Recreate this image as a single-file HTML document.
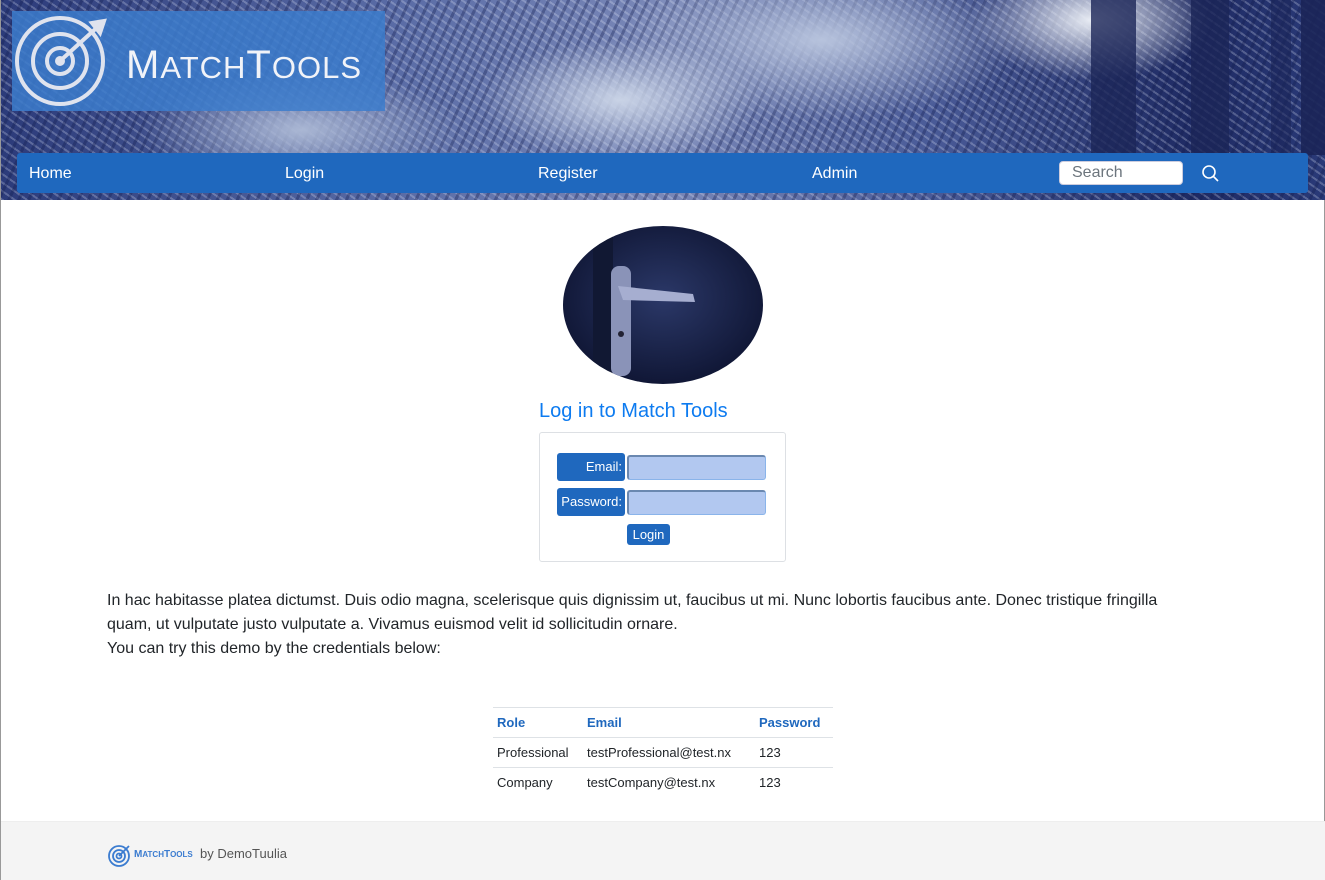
<!DOCTYPE html>
<html><head><meta charset="utf-8">
<style>
*{box-sizing:border-box;margin:0;padding:0}
body{width:1325px;height:880px;overflow:hidden;background:#fff;font-family:"Liberation Sans",sans-serif;color:#212529;position:relative;border-left:1px solid #999;border-right:1px solid #999}
.hdr{position:absolute;left:0;top:0;width:1325px;height:200px;overflow:hidden;
background:
radial-gradient(ellipse 120px 60px at 1090px 20px,#e8ecf4,transparent),
radial-gradient(ellipse 140px 60px at 620px 100px,#c9d3e6,transparent),
radial-gradient(ellipse 200px 80px at 820px 40px,#b7c3dd,transparent),
radial-gradient(ellipse 160px 60px at 300px 130px,#aab7d4,transparent),
repeating-linear-gradient(115deg,rgba(20,30,80,.35) 0 3px,transparent 3px 9px),
repeating-linear-gradient(35deg,rgba(230,235,250,.25) 0 2px,transparent 2px 7px),
linear-gradient(90deg,#2c3b7a,#5a6ca6 30%,#7a88b8 50%,#4a5b98 70%,#1e2a63 90%,#2a3a78)}
.trunk{position:absolute;top:0;height:155px;background:#1b2558;opacity:.8}
.logo{position:absolute;left:11px;top:11px;width:373px;height:100px;background:rgba(60,125,205,.85)}
.logo .t{position:absolute;left:114px;top:32px;color:#f1f3f8;font-size:40px;letter-spacing:1px;line-height:44px}
.nav{position:absolute;left:16px;top:153px;width:1291px;height:40px;background:#1f68be;border-radius:3px;color:#fff;font-size:16px}
.nav span{position:absolute;top:12px}
.srch{position:absolute;left:1042px;top:8px;width:124px;height:24px;background:#fff;border-radius:4px;border:1px solid #ccd;color:#6c757d;padding-left:12px;line-height:21px;font-size:16px}
h2{position:absolute;left:538px;top:400px;font-size:20px;font-weight:normal;color:#0d7bf0}
.form{position:absolute;left:538px;top:432px;width:247px;height:130px;border:1px solid #dde0e4;border-radius:3px}
.lab{position:absolute;left:17px;width:68px;height:28px;background:#1f68be;color:#fff;border-radius:3px;font-size:13px;text-align:right;padding-right:3px;line-height:27px}
.inp{position:absolute;left:87px;width:139px;height:25px;background:#b2c8f0;border:1px solid #8ab4ea;border-top:2px solid #6a88b0;border-left:2px solid #6a88b0;border-radius:3px}
.btn{position:absolute;left:87px;top:91px;width:43px;height:21px;background:#1f68be;color:#fff;border-radius:3px;font-size:13px;text-align:center;line-height:21px}
p{position:absolute;left:106px;top:589px;width:1085px;font-size:16px;line-height:24px}
table{position:absolute;left:492px;top:707px;width:340px;border-collapse:collapse;font-size:13px}
td,th{text-align:left;padding:0 4px;height:30px;border-top:1px solid #dee2e6}
th{color:#1f68be;font-weight:bold}
.foot{position:absolute;left:0;top:821px;width:1325px;height:59px;background:#f4f4f4;border-top:1px solid #eee}
</style></head><body>
<div class="hdr">
<div class="trunk" style="left:1090px;width:45px"></div>
<div class="trunk" style="left:1190px;width:38px"></div>
<div class="trunk" style="left:1270px;width:20px;opacity:.6"></div>
<div class="trunk" style="left:1300px;width:25px;opacity:.9"></div>
<div class="logo">
<svg width="100" height="100" style="position:absolute;left:0;top:0" fill="none" stroke="#dfe3ee" stroke-width="4">
<circle cx="48" cy="50" r="43"/>
<circle cx="48" cy="50" r="27"/>
<circle cx="48" cy="50" r="13"/>
<circle cx="48" cy="50" r="3" fill="#dfe3ee"/>
<path d="M48 50 L90 12" stroke-width="4"/>
<path d="M80 12 L92 10 L88 22 Z" fill="#dfe3ee"/>
</svg>
<div class="t">M<span style="font-size:31px">ATCH</span>T<span style="font-size:31px">OOLS</span></div>
</div>
<div class="nav">
<span style="left:12px">Home</span><span style="left:268px">Login</span><span style="left:521px">Register</span><span style="left:795px">Admin</span>
<div class="srch">Search</div>
<svg width="20" height="20" style="position:absolute;left:1184px;top:11px" fill="none" stroke="#fff" stroke-width="1.6"><circle cx="8" cy="8" r="6"/><path d="M12.5 12.5 L17 17"/></svg>
</div>
</div>
<svg width="200" height="160" style="position:absolute;left:562px;top:226px">
<defs><clipPath id="c"><ellipse cx="100" cy="79" rx="100" ry="79"/></clipPath>
<radialGradient id="g" cx="50%" cy="45%" r="60%"><stop offset="0" stop-color="#2b3868"/><stop offset="1" stop-color="#0d1330"/></radialGradient></defs>
<g clip-path="url(#c)">
<rect width="200" height="160" fill="url(#g)"/>
<rect x="30" y="0" width="20" height="160" fill="#111833"/>
<rect x="48" y="40" width="20" height="110" rx="8" fill="#8a93b8"/>
<path d="M55 60 L130 68 L132 76 L60 74 Z" fill="#a6aed0"/>
<circle cx="58" cy="108" r="3" fill="#223"/>
</g></svg>
<h2>Log in to Match Tools</h2>
<div class="form">
<div class="lab" style="top:20px">Email:</div><div class="inp" style="top:22px"></div>
<div class="lab" style="top:55px">Password:</div><div class="inp" style="top:57px"></div>
<div class="btn">Login</div>
</div>
<p>In hac habitasse platea dictumst. Duis odio magna, scelerisque quis dignissim ut, faucibus ut mi. Nunc lobortis faucibus ante. Donec tristique fringilla quam, ut vulputate justo vulputate a. Vivamus euismod velit id sollicitudin ornare.<br>You can try this demo by the credentials below:</p>
<table>
<tr><th style="width:90px">Role</th><th style="width:172px">Email</th><th>Password</th></tr>
<tr><td>Professional</td><td>testProfessional@test.nx</td><td>123</td></tr>
<tr><td>Company</td><td>testCompany@test.nx</td><td>123</td></tr>
</table>
<div class="foot">
<svg width="24" height="24" style="position:absolute;left:107px;top:21px" fill="none" stroke="#3b7cd0" stroke-width="1.8"><circle cx="11" cy="13" r="10"/><circle cx="11" cy="13" r="6"/><circle cx="11" cy="13" r="2.5"/><path d="M11 13 L21 3"/></svg>
<span style="position:absolute;left:133px;top:27px;font-size:10px;color:#3b7cd0;font-weight:bold">M<span style="font-size:8px">ATCH</span>T<span style="font-size:8px">OOLS</span></span>
<span style="position:absolute;left:199px;top:24px;font-size:13px;color:#555">by DemoTuulia</span>
</div>
</body></html>
